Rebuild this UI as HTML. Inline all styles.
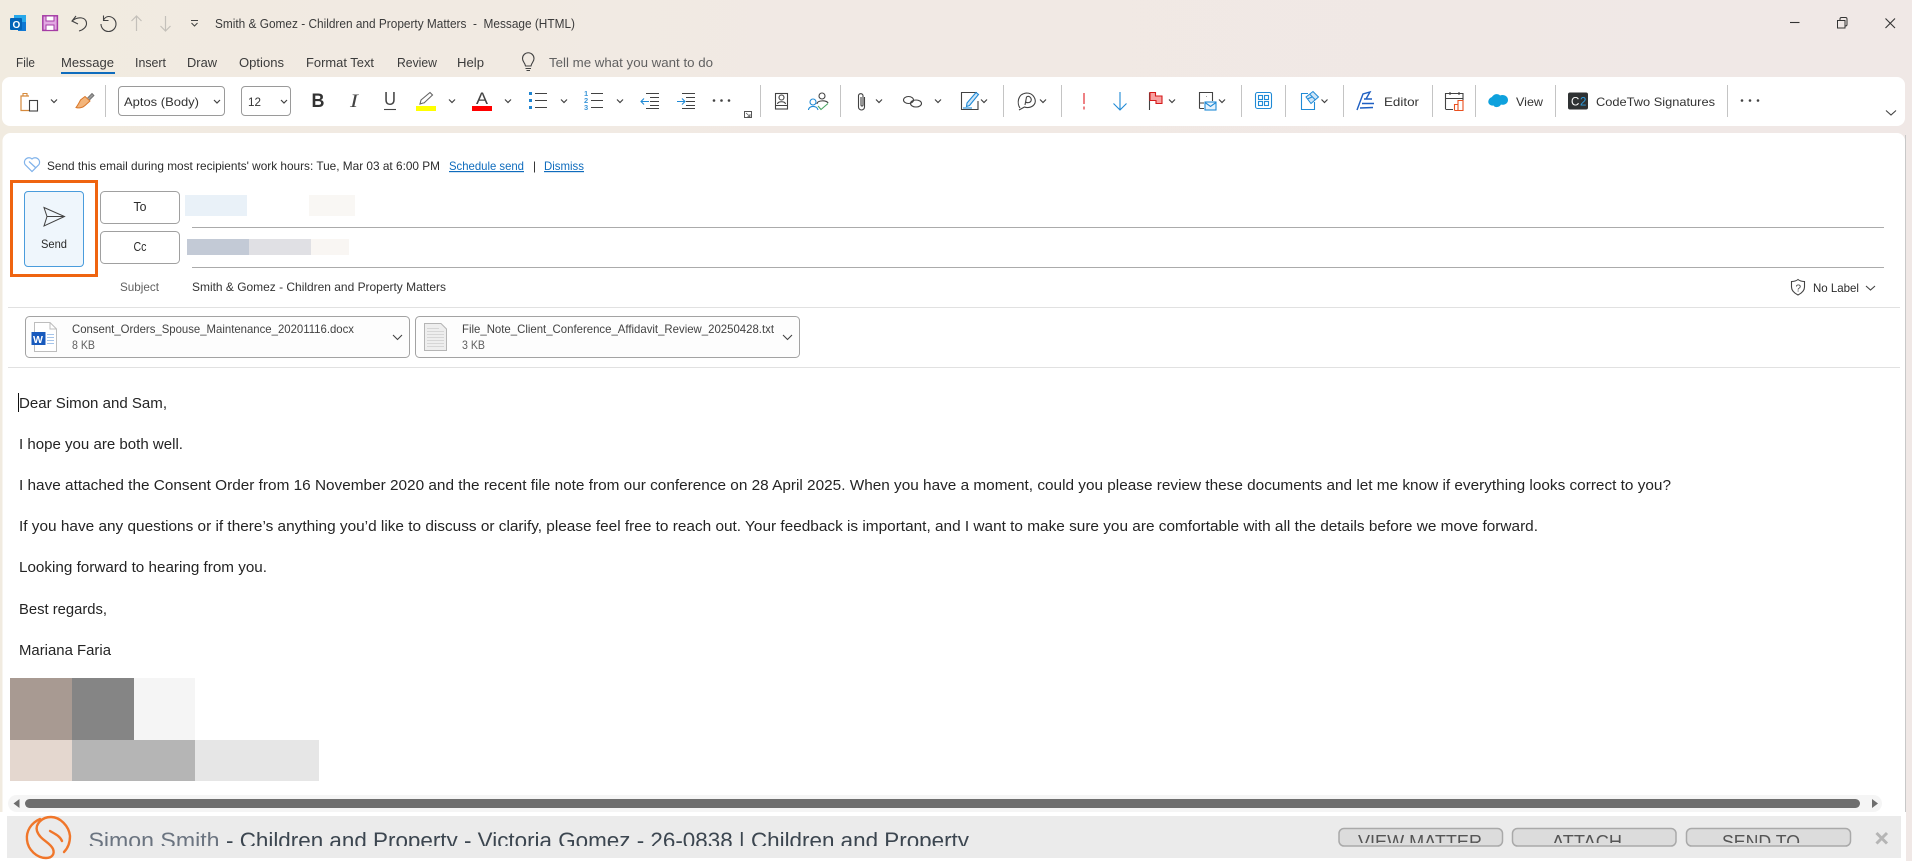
<!DOCTYPE html>
<html lang="en"><head><meta charset="utf-8"><title>Smith &amp; Gomez - Children and Property Matters - Message (HTML)</title>
<style>
html,body{margin:0;padding:0;width:1912px;height:861px;overflow:hidden;background:#fff}
svg{display:block;position:absolute;left:0;top:0}
text{font-family:"Liberation Sans",sans-serif;fill:#2b2b2b;font-size:12px}
.b{font-size:14.5px;fill:#242424}
.t{font-size:12.5px;fill:#3b3b3b}
.a{font-size:12px;fill:#424242}
.l{fill:#0f6cbd;text-decoration:underline}
.s{stroke:#c4c4c4;stroke-width:1}
.i{fill:none;stroke:#424242;stroke-width:1.1}
.bl{fill:none;stroke:#1f8ad6;stroke-width:1.1}
</style></head><body>
<svg width="1912" height="861" viewBox="0 0 1912 861" xmlns="http://www.w3.org/2000/svg">
<defs>
<linearGradient id="g" x1="0" x2="1" y1="0" y2="0"><stop offset="0" stop-color="#f1ebe0"/><stop offset=".45" stop-color="#f1e9e4"/><stop offset="1" stop-color="#f0e8e6"/></linearGradient>
<clipPath id="c1"><rect x="0" y="816" width="1300" height="30"/></clipPath>
<clipPath id="c2"><rect x="1300" y="829" width="560" height="14"/></clipPath>
<path id="ch" d="M-3 -1.5L0 1.5L3 -1.5" fill="none" stroke="#424242" stroke-width="1.2"/>
</defs>
<rect width="1912" height="861" fill="url(#g)"/>

<!-- title bar -->
<rect x="14" y="15" width="12" height="14" fill="#28a8ea"/><rect x="18" y="22" width="8" height="9" fill="#0f78d4"/>
<rect x="10" y="18" width="12" height="12" rx="1" fill="#0364b8"/><text x="12.5" y="28" style="font-size:10px;font-weight:bold;fill:#fff">O</text>
<rect x="42.800" y="15.800" width="14.600" height="14.600" fill="#e2a9e2" stroke="#a53ca5" stroke-width="1.500"/><rect x="46" y="16" width="8" height="5" fill="#fff" stroke="#a53ca5"/><rect x="46" y="25" width="8" height="5.400" fill="#fff" stroke="#a53ca5"/>
<path class="i" d="M76 16L72 21L78 24M72 21C78 16 86 17 86.500 23C86.800 27 83 30 79 31"/>
<path class="i" d="M103.500 15.500V20.500H108.500M103.500 20C105 17.500 107 16.500 108.500 16.500A7.500 7.500 0 1 1 101 24"/>
<path d="M136.500 31V16M131.500 21L136.500 16L141.500 21" fill="none" stroke="#c4c0ba" stroke-width="1.200"/>
<path d="M165.500 16V31M160.500 26L165.500 31L170.500 26" fill="none" stroke="#c4c0ba" stroke-width="1.200"/>
<path d="M191 20.500H198M191.500 23L194.500 26L197.500 23" fill="none" stroke="#424242" stroke-width="1"/>
<text x="215" y="28" class="t" textLength="360" lengthAdjust="spacingAndGlyphs" xml:space="preserve">Smith &amp; Gomez - Children and Property Matters  -  Message (HTML)</text>
<path d="M1790 22.500H1799.500" stroke="#333" stroke-width="1.100"/>
<path d="M1837.500 20.500h7.500v7.500h-7.500zM1840 20.500v-1.500a1.500 1.500 0 0 1 1.500-1.500h4a1.500 1.500 0 0 1 1.500 1.500v5.500a1.500 1.500 0 0 1-1.500 1.500h-.5" fill="none" stroke="#333" stroke-width="1"/>
<path d="M1885.500 18.500L1895 28M1895 18.500L1885.500 28" stroke="#333" stroke-width="1.100"/>

<!-- tabs -->
<text x="16" y="67" class="t" textLength="19" lengthAdjust="spacingAndGlyphs">File</text>
<text x="61" y="67" class="t" textLength="53" lengthAdjust="spacingAndGlyphs">Message</text>
<rect x="61" y="72" width="54" height="2" fill="#0f6cbd"/>
<text x="135" y="67" class="t" textLength="31" lengthAdjust="spacingAndGlyphs">Insert</text>
<text x="187" y="67" class="t" textLength="30" lengthAdjust="spacingAndGlyphs">Draw</text>
<text x="239" y="67" class="t" textLength="45" lengthAdjust="spacingAndGlyphs">Options</text>
<text x="306" y="67" class="t" textLength="68" lengthAdjust="spacingAndGlyphs">Format Text</text>
<text x="397" y="67" class="t" textLength="40" lengthAdjust="spacingAndGlyphs">Review</text>
<text x="457" y="67" class="t" textLength="27" lengthAdjust="spacingAndGlyphs">Help</text>
<path class="i" d="M525.500 66C525 62.500 522.500 62 522.500 58.500A5.600 5.600 0 0 1 534 58.500C534 62 531.500 62.500 531 66ZM525.500 68.500H531M526.500 70.500H530"/>
<text x="549" y="67" class="t" style="fill:#616161" textLength="164" lengthAdjust="spacingAndGlyphs">Tell me what you want to do</text>

<!-- ribbon -->
<rect x="2" y="77" width="1903" height="49" rx="8" fill="#fff"/>
<!-- clipboard -->
<path d="M29 96H21V110.500H29" fill="none" stroke="#d68a3c" stroke-width="1.200"/><path d="M23 96V93.500H27V96" fill="none" stroke="#d68a3c" stroke-width="1.100"/>
<rect x="29.500" y="100.500" width="8" height="10.500" fill="#fff" stroke="#424242" stroke-width="1.100"/>
<use href="#ch" x="54" y="101"/>
<path d="M85 96.500L90 101L85 105.500C83 107.500 79 108.500 76 107.500C78 105 79 103 80.500 100Z" fill="#f3b57b" stroke="#d9772a" stroke-width="1"/><path d="M87.500 98L92 93.500L94 95.500L89.500 100" fill="#999" stroke="#666" stroke-width=".8"/>
<path class="s" d="M105.500 85V117"/>
<rect x="118.500" y="86.500" width="106" height="29" rx="3.500" fill="#fff" stroke="#9a9a9a"/>
<text x="124" y="106" textLength="75" lengthAdjust="spacingAndGlyphs" style="fill:#333">Aptos (Body)</text>
<use href="#ch" x="217" y="101.500"/>
<rect x="241.500" y="86.500" width="49" height="29" rx="3.500" fill="#fff" stroke="#9a9a9a"/>
<text x="248" y="106" textLength="13" lengthAdjust="spacingAndGlyphs" style="fill:#333">12</text>
<use href="#ch" x="284" y="101.500"/>
<text x="311.500" y="107" style="font-size:19px;font-weight:bold;fill:#333" textLength="13" lengthAdjust="spacingAndGlyphs">B</text>
<text x="350" y="107" style="font-size:19px;font-style:italic;fill:#444;font-family:'Liberation Serif',serif" textLength="8" lengthAdjust="spacingAndGlyphs">I</text>
<text x="384" y="105" style="font-size:18px;fill:#444" textLength="12" lengthAdjust="spacingAndGlyphs">U</text><path d="M384 109.500H396" stroke="#444" stroke-width="1.100"/>
<path d="M423 103L420 104L421 100L430 92.500L432.500 95L424 103Z" fill="#fff" stroke="#666" stroke-width="1.100"/>
<rect x="416" y="106" width="20" height="5" fill="#ffff00"/>
<use href="#ch" x="452" y="101"/>
<text x="476" y="104" style="font-size:17px;fill:#444" textLength="12" lengthAdjust="spacingAndGlyphs">A</text>
<rect x="472" y="106" width="20" height="5" fill="#ff0000"/>
<use href="#ch" x="508" y="101"/>
<rect x="529" y="92" width="3" height="3" fill="#1f84d0"/><rect x="529" y="99" width="3" height="3" fill="#1f84d0"/><rect x="529" y="106" width="3" height="3" fill="#1f84d0"/>
<path d="M535 93.500H547M535 100.500H547M535 107.500H547" stroke="#424242" stroke-width="1.100"/>
<use href="#ch" x="564" y="101"/>
<text x="584" y="96" style="font-size:7.500px;font-weight:bold;fill:#3c96d8">1</text><text x="584" y="103" style="font-size:7.500px;font-weight:bold;fill:#3c96d8">2</text><text x="584" y="110" style="font-size:7.500px;font-weight:bold;fill:#3c96d8">3</text>
<path d="M591 93.500H603M591 100.500H603M591 107.500H603" stroke="#424242" stroke-width="1.100"/>
<use href="#ch" x="620" y="101"/>
<path d="M646 93.500H659M650 97.500H659M650 101.500H659M650 105.500H659M646 108.500H659" stroke="#424242" stroke-width="1"/><path class="bl" d="M649 101.500H641M644 98.500L641 101.500L644 104.500"/>
<path d="M682 93.500H695M686 97.500H695M686 101.500H695M686 105.500H695M682 108.500H695" stroke="#424242" stroke-width="1"/><path class="bl" d="M677 101.500H685M682 98.500L685 101.500L682 104.500"/>
<circle cx="714" cy="100.500" r="1.300" fill="#424242"/><circle cx="721.500" cy="100.500" r="1.300" fill="#424242"/><circle cx="729" cy="100.500" r="1.300" fill="#424242"/>
<rect x="744.500" y="111.500" width="7" height="6" fill="none" stroke="#555"/><path d="M746 113L750 116.500M750 114V116.500H747.500" fill="none" stroke="#555" stroke-width=".8"/>
<path class="s" d="M760.500 85V117"/>
<rect x="775.500" y="93.500" width="12" height="15.500" fill="#fff" stroke="#424242" stroke-width="1.100"/><path d="M776 105.500H787" stroke="#424242"/><circle cx="781.500" cy="97.500" r="2.500" class="i"/><path class="i" d="M777.500 104C778 101 785 101 785.500 104"/>
<circle cx="822" cy="96" r="3" class="i"/><path class="i" d="M817 104C817 100 827 100 828 103"/>
<circle cx="813" cy="102" r="3" class="bl"/><path class="bl" d="M808.500 110C808.500 105.500 817 105 818 110"/>
<path d="M818 106L821 109.500L828 103.500" fill="none" stroke="#4aa564" stroke-width="1.100"/>
<path class="s" d="M840.500 85V117"/>
<path class="i" d="M864.500 97V107A3 3 0 0 1 858.500 107V95.500A2.300 2.300 0 0 1 863 95.500V105A1 1 0 0 1 861 105V97"/>
<use href="#ch" x="879" y="101"/>
<ellipse cx="908.500" cy="100" rx="5" ry="3.500" class="i"/><ellipse cx="916" cy="103.500" rx="5.500" ry="3.500" class="i"/>
<use href="#ch" x="938" y="101"/>
<path class="i" d="M977 92.500H961.500V109.500H978V101"/>
<path d="M967 103L976 92.500L978.500 94.500L969.500 105.500L966.500 106.500Z" fill="#cfe5f7" stroke="#1f8ad6" stroke-width="1.100"/><path d="M963 108H972" stroke="#1f8ad6" stroke-width="1.100"/>
<use href="#ch" x="984" y="101"/>
<path class="s" d="M1003.500 85V117"/>
<path class="i" d="M1020 108C1017 104 1017 94 1026.500 93C1034 93 1036 100 1035 103C1033.500 107 1028 108.500 1024.500 107L1019 110M1025 105L1026.500 97C1029 95 1032 98 1031 101C1030 103 1027 103 1025.500 102"/>
<use href="#ch" x="1043" y="101"/>
<path class="s" d="M1061.500 85V117"/>
<path d="M1084 93V104" stroke="#e8575a" stroke-width="1.500"/><path d="M1084 106.500V109.500" stroke="#e8575a" stroke-width="1.500"/>
<path class="bl" d="M1120 92V110M1113.500 103.500L1120 110L1126.500 103.500"/>
<path d="M1149.500 110V92.500" stroke="#424242" stroke-width="1.100"/><path d="M1150 92.500H1155.500V96H1162V103.500H1156V100.500H1150Z" fill="#f8a0a0" stroke="#d51a1a" stroke-width="1.100"/>
<use href="#ch" x="1172" y="101"/>
<path class="i" d="M1199.500 108.500V92.500H1212.500V101M1206 96.500H1206.500M1199.500 103H1204M1199.500 108.500H1204"/>
<rect x="1205" y="102" width="11" height="8" fill="#e6f2fc" stroke="#1f8ad6" stroke-width="1.100"/><path class="bl" d="M1205 102.500L1210.500 106.500L1216 102.500"/>
<use href="#ch" x="1222" y="101"/>
<path class="s" d="M1241.500 85V117"/>
<rect x="1255.500" y="92.500" width="16" height="16" rx="2" fill="none" stroke="#1f8ad6" stroke-width="1.100"/>
<rect x="1258.500" y="95.500" width="4" height="4" class="bl"/><rect x="1264.500" y="95.500" width="4" height="4" class="bl"/><rect x="1258.500" y="101.500" width="4" height="4" class="bl"/><rect x="1264.500" y="101.500" width="4" height="4" class="bl"/>
<path class="s" d="M1285.500 85V117"/>
<path class="bl" d="M1308 93.500H1301.500V109.500H1314.500V102"/>
<path d="M1306 97L1313 91.500L1318.500 97L1311 103.500Z" fill="#cfe5f7" stroke="#1f8ad6"/><path d="M1310 94.500L1315.500 100M1307.500 99L1312 97" stroke="#1f8ad6"/>
<use href="#ch" x="1324.500" y="101"/>
<path class="s" d="M1343.500 85V117"/>
<path d="M1357 110L1363 94L1370 92L1366 99M1360 108L1373 107.500M1362 103.500H1374M1364 99H1372" fill="none" stroke="#1e5fc2" stroke-width="1.400"/>
<text x="1384" y="106" textLength="35" lengthAdjust="spacingAndGlyphs" style="fill:#333">Editor</text>
<path class="s" d="M1432.500 85V117"/>
<path class="i" d="M1445.500 109V93.500H1463V100M1445.500 98.500H1463M1450 92V95M1459 92V95M1445.500 109.500H1453"/>
<path d="M1454.500 110.500V104.500H1458V110.500M1458 110.500V100.500H1463V110.500H1454.500" fill="#fff" stroke="#e9501f" stroke-width="1.100"/>
<path class="s" d="M1475.500 85V117"/>
<path d="M1492 97C1494 93.500 1498.500 93.500 1500 95.500C1503.500 94 1508 96 1508 100C1508 104 1503.500 105.500 1501 104.500C1499.500 107.500 1495 108 1493.500 105.500C1490 106 1487.500 103.500 1488.500 100.500C1489 98.500 1490.500 97.500 1492 97Z" fill="#0ea1dd"/>
<text x="1516" y="106" textLength="27" lengthAdjust="spacingAndGlyphs" style="fill:#333">View</text>
<path class="s" d="M1555.500 85V117"/>
<rect x="1568" y="92.500" width="20" height="17" rx="2" fill="#2f3233"/>
<text x="1571" y="105.500" style="font-size:11.500px;fill:#fff">C</text><text x="1580" y="105.500" style="font-size:11.500px;fill:#2d9ddf">2</text>
<text x="1596" y="106" textLength="119" lengthAdjust="spacingAndGlyphs" style="fill:#333">CodeTwo Signatures</text>
<path class="s" d="M1727.500 85V117"/>
<circle cx="1742" cy="100.500" r="1.300" fill="#424242"/><circle cx="1750" cy="100.500" r="1.300" fill="#424242"/><circle cx="1758" cy="100.500" r="1.300" fill="#424242"/>
<path d="M1886 110.500L1891 115L1896 110.500" fill="none" stroke="#424242" stroke-width="1.100"/>

<!-- mail body -->
<path d="M2.500 812V141a8 8 0 0 1 8-8H1897a8 8 0 0 1 8 8V861H2.500Z" fill="#fff"/>
<rect x="0" y="812" width="6" height="49" fill="#fff"/>
<path d="M1905.500 135V812" stroke="#c8c8c8"/>
<rect x="1900" y="812" width="6" height="49" fill="#fff"/>
<!-- hint -->
<path d="M25 164.500A4.500 4.500 0 0 1 32 159A4.500 4.500 0 0 1 39 164.500L32 171.500ZM29 161.500L36 168" fill="#fff" stroke="#7fb2ea" stroke-width="1.200"/>
<text x="47" y="170" textLength="393" lengthAdjust="spacingAndGlyphs" style="font-size:11.800px">Send this email during most recipients' work hours: Tue, Mar 03 at 6:00 PM</text>
<text x="449" y="170" class="l" textLength="75" lengthAdjust="spacingAndGlyphs" style="font-size:11.800px">Schedule send</text>
<text x="533" y="170" style="font-size:11.800px">|</text>
<text x="544" y="170" class="l" textLength="40" lengthAdjust="spacingAndGlyphs" style="font-size:11.800px">Dismiss</text>
<!-- send -->
<rect x="11.500" y="181.500" width="85" height="94" fill="none" stroke="#ef6410" stroke-width="3"/>
<rect x="24.500" y="191.500" width="59" height="75" rx="3.500" fill="#eff6fc" stroke="#4a9cdc"/>
<path d="M44 207.500L64.500 216.500L44 226L47 216.500ZM47 216.500H64" fill="none" stroke="#424242" stroke-width="1"/>
<text x="41" y="248" textLength="26" lengthAdjust="spacingAndGlyphs">Send</text>
<rect x="100.500" y="191.500" width="79" height="32" rx="4" fill="#fff" stroke="#a0a0a0"/>
<text x="133.500" y="211" textLength="13" lengthAdjust="spacingAndGlyphs" style="font-size:12.500px">To</text>
<rect x="100.500" y="231.500" width="79" height="32" rx="4" fill="#fff" stroke="#a0a0a0"/>
<text x="133.500" y="251" textLength="13" lengthAdjust="spacingAndGlyphs" style="font-size:12.500px">Cc</text>
<rect x="185" y="195" width="62" height="21" fill="#e9f1f8"/><rect x="309" y="195" width="46" height="21" fill="#f9f7f4"/>
<rect x="187" y="239" width="62" height="16" fill="#c3cad6"/><rect x="249" y="239" width="62" height="16" fill="#e0e0e4"/><rect x="311" y="239" width="38" height="16" fill="#f9f6f3"/>
<rect x="192" y="227" width="1692" height="1" fill="#ababab"/><rect x="192" y="267" width="1692" height="1" fill="#ababab"/>
<text x="120" y="291" textLength="39" lengthAdjust="spacingAndGlyphs" style="fill:#616161">Subject</text>
<text x="192" y="291" textLength="254" lengthAdjust="spacingAndGlyphs" style="fill:#333">Smith &amp; Gomez - Children and Property Matters</text>
<path class="i" d="M1798 279.500C1795.500 281.500 1793.500 281.500 1791.500 281.500V287C1791.500 291 1795 293.500 1798 295C1801 293.500 1804.500 291 1804.500 287V281.500C1802.500 281.500 1800.500 281.500 1798 279.500Z"/>
<text x="1795.500" y="291.500" style="font-size:10px;fill:#424242">?</text>
<text x="1813" y="292" textLength="46" lengthAdjust="spacingAndGlyphs">No Label</text>
<path d="M1866 286L1870.500 290L1875 286" fill="none" stroke="#424242" stroke-width="1.100"/>
<rect x="8" y="307" width="1892" height="1" fill="#e1e1e1"/>
<!-- attachments -->
<rect x="25.500" y="316.500" width="384" height="41" rx="4" fill="#fdfdfd" stroke="#a3a3a3"/>
<path d="M34.500 322.500H50L56.500 329V351.500H34.500Z" fill="#fff" stroke="#bdbdbd"/><path d="M50 322.500V329H56.500" fill="none" stroke="#bdbdbd"/>
<path d="M47 334.500H54M47 337.500H54M47 340.500H54M47 343.500H54" stroke="#a5c4ea"/>
<rect x="31.500" y="332" width="14" height="13" fill="#185abd"/><text x="33" y="343" style="font-size:10.500px;font-weight:bold;fill:#fff">W</text>
<text x="72" y="333" class="a" textLength="282" lengthAdjust="spacingAndGlyphs">Consent_Orders_Spouse_Maintenance_20201116.docx</text>
<text x="72" y="349" class="a" style="fill:#616161;font-size:11.500px" textLength="23" lengthAdjust="spacingAndGlyphs">8 KB</text>
<path d="M393 335L397.500 339.500L402 335" fill="none" stroke="#424242" stroke-width="1.100"/>
<rect x="415.500" y="316.500" width="384" height="41" rx="4" fill="#fdfdfd" stroke="#a3a3a3"/>
<path d="M424.500 323.500H441L446.500 329V350.500H424.500Z" fill="#eeeeee" stroke="#b5b5b5"/>
<path d="M427 328.500H439M427 331.500H444M427 334.500H444M427 337.500H444M427 340.500H444M427 343.500H444M427 346.500H444" stroke="#d6d6d6"/>
<text x="462" y="333" class="a" textLength="312" lengthAdjust="spacingAndGlyphs">File_Note_Client_Conference_Affidavit_Review_20250428.txt</text>
<text x="462" y="349" class="a" style="fill:#616161;font-size:11.500px" textLength="23" lengthAdjust="spacingAndGlyphs">3 KB</text>
<path d="M783 335L787.500 339.500L792 335" fill="none" stroke="#424242" stroke-width="1.100"/>
<rect x="8" y="367" width="1892" height="1" fill="#e1e1e1"/>
<!-- message -->
<rect x="18" y="393" width="1" height="19" fill="#111"/>
<text x="19" y="408" class="b" textLength="148" lengthAdjust="spacingAndGlyphs">Dear Simon and Sam,</text>
<text x="19" y="449" class="b" textLength="164" lengthAdjust="spacingAndGlyphs">I hope you are both well.</text>
<text x="19" y="490" class="b" textLength="1652" lengthAdjust="spacingAndGlyphs">I have attached the Consent Order from 16 November 2020 and the recent file note from our conference on 28 April 2025. When you have a moment, could you please review these documents and let me know if everything looks correct to you?</text>
<text x="19" y="531" class="b" textLength="1519" lengthAdjust="spacingAndGlyphs">If you have any questions or if there’s anything you’d like to discuss or clarify, please feel free to reach out. Your feedback is important, and I want to make sure you are comfortable with all the details before we move forward.</text>
<text x="19" y="572" class="b" textLength="248" lengthAdjust="spacingAndGlyphs">Looking forward to hearing from you.</text>
<text x="19" y="614" class="b" textLength="88" lengthAdjust="spacingAndGlyphs">Best regards,</text>
<text x="19" y="655" class="b" textLength="92" lengthAdjust="spacingAndGlyphs">Mariana Faria</text>
<!-- signature blocks -->
<rect x="10" y="678" width="62" height="62" fill="#a89a92"/><rect x="72" y="678" width="62" height="62" fill="#858585"/><rect x="134" y="678" width="61" height="62" fill="#f5f5f5"/>
<rect x="10" y="740" width="62" height="41" fill="#e4d7cf"/><rect x="72" y="740" width="123" height="41" fill="#b5b5b5"/><rect x="195" y="740" width="124" height="41" fill="#e6e6e6"/>
<!-- scrollbar -->
<rect x="8" y="795" width="1874" height="17" rx="8.500" fill="#f5f5f5"/>
<rect x="25" y="799" width="1835" height="9" rx="4.500" fill="#6e6e6e"/>
<path d="M19.500 799V808L13.500 803.500Z" fill="#6e6e6e"/><path d="M1872 799V808L1878 803.500Z" fill="#6e6e6e"/>
<!-- bottom bar -->
<rect x="7" y="816" width="1894" height="42" fill="#ebebeb"/>
<g fill="none" stroke="#f0762a" stroke-width="2.400" stroke-linecap="round">
<path d="M40 819C31 823 26 831 27 840C28 850 37 858 46 858C52 858 55 854 53 849C50 842 40 840 37 831C35 824 42 817 51 817C60 817 69 826 70 836C70 842 68 848 64 852"/>
<path d="M50 831C55 834 60 836 62 841"/>
</g>
<g clip-path="url(#c1)">
<text x="88.500" y="848" style="font-size:22px;fill:#6b7480" textLength="131" lengthAdjust="spacingAndGlyphs">Simon Smith</text>
<text x="226" y="848" style="font-size:22px;fill:#3c4650" textLength="743" lengthAdjust="spacingAndGlyphs">- Children and Property - Victoria Gomez - 26-0838 | Children and Property</text>
</g>
<rect x="1339" y="828.500" width="163.500" height="17.500" rx="5" fill="#dcdcdc" stroke="#a9a9a9" stroke-width="1.500"/>
<rect x="1512.500" y="828.500" width="163.500" height="17.500" rx="5" fill="#dcdcdc" stroke="#a9a9a9" stroke-width="1.500"/>
<rect x="1686.500" y="828.500" width="164" height="17.500" rx="5" fill="#dcdcdc" stroke="#a9a9a9" stroke-width="1.500"/>
<g clip-path="url(#c2)">
<text x="1358" y="848" style="font-size:18px;fill:#555" textLength="124" lengthAdjust="spacingAndGlyphs">VIEW MATTER</text>
<text x="1552" y="848" style="font-size:18px;fill:#555" textLength="70" lengthAdjust="spacingAndGlyphs">ATTACH</text>
<text x="1722" y="848" style="font-size:18px;fill:#555" textLength="78" lengthAdjust="spacingAndGlyphs">SEND TO</text>
</g>
<path d="M1876.500 833L1887 843.500M1887 833L1876.500 843.500" stroke="#b5b5b5" stroke-width="3"/>
</svg>
</body></html>
